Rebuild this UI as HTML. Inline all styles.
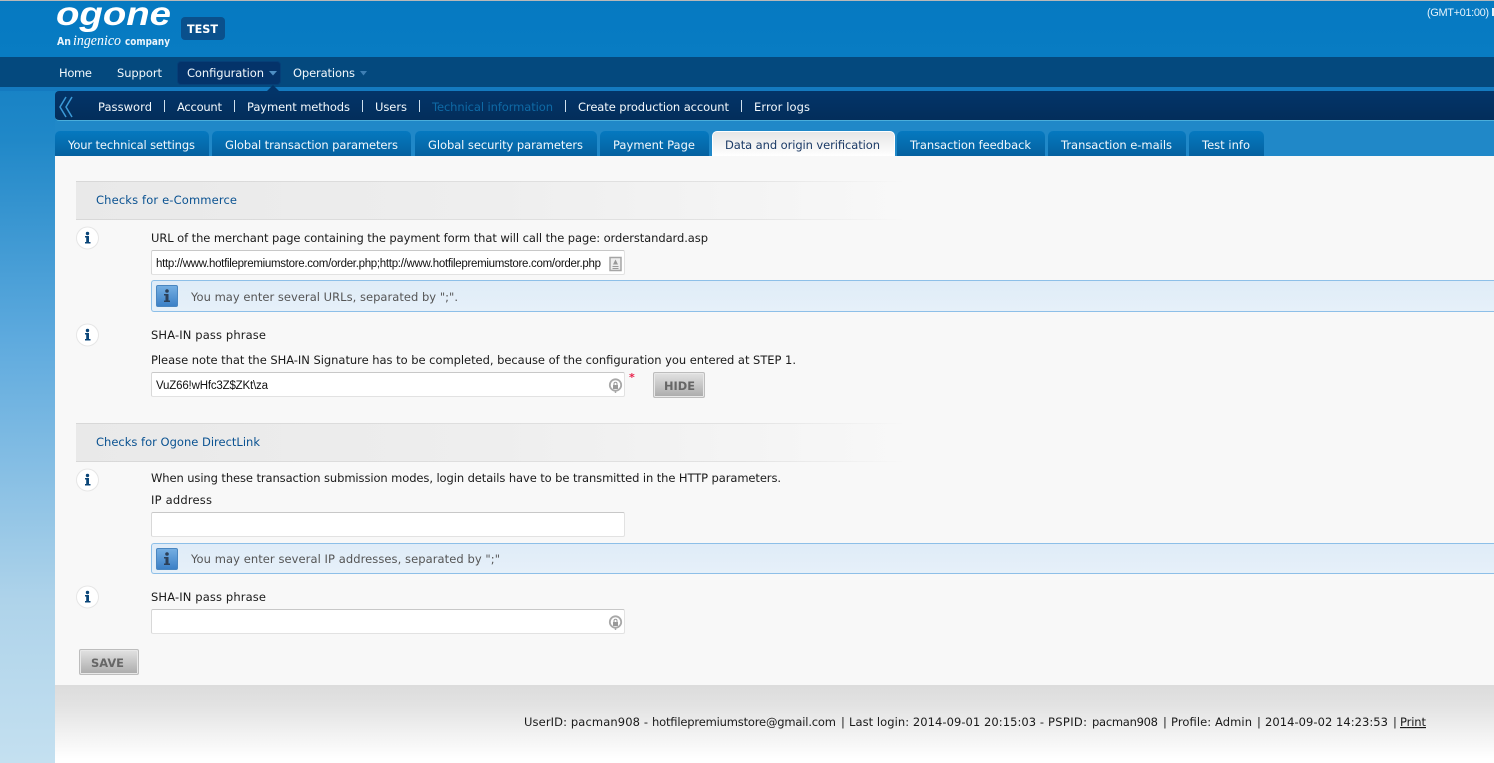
<!DOCTYPE html>
<html lang="en"><head><meta charset="utf-8"><title>Data and origin verification</title>
<style>
html,body{margin:0;padding:0;width:1494px;height:763px;overflow:hidden}
body{position:relative;background:linear-gradient(#0a7ac2 0,#2088c8 140px,#5eaade 340px,#aed3ea 600px,#c4e0f0 763px);font-family:"DejaVu Sans",sans-serif}
div{position:absolute;box-sizing:border-box}
svg{position:absolute;left:0;top:0}
text{font-family:"DejaVu Sans",sans-serif;font-size:11.5px;fill:#1a1a1a;white-space:pre}
.n text,text.n{fill:#f2f8fc}
.i{font-family:"Liberation Sans",sans-serif;font-size:11.5px;fill:#111}
.tab{top:131px;height:25px;border-radius:5px 5px 0 0;background:linear-gradient(#0579c0,#05619f)}
.inp{left:151px;width:474px;height:25px;background:#fff;border:1px solid #e2e2e2;border-top-color:#c8c8c8;border-left-color:#d8d8d8;border-radius:2px}
.box{left:151px;width:1343px;background:linear-gradient(#dfecf8,#e6f0f9);border:1px solid #8dbfe8;border-right:0;border-radius:3px 0 0 3px}
.ic{left:156px;width:22px;height:22px;border-radius:2px;background:linear-gradient(#74aee2,#3c80c6);border:1px solid #4a86c0}
.sec{left:76px;width:830px;background:linear-gradient(90deg,#e9e9e9,#eeeeee 50%,#f8f8f8);border-top:1px solid #dcdcdc;border-bottom:1px solid #e0e0e0;border-image:linear-gradient(90deg,#d8d8d8,#e2e2e2 80%,#f8f8f8) 1}
.btn{background:linear-gradient(#e2e2e2,#ababab);border:1px solid #bdbdbd;box-shadow:inset 0 0 0 1px #e8e8e8;border-radius:2px}
</style></head><body>
<div style="left:0;top:0;width:1494px;height:1px;background:#b8b8b8"></div>
<div style="left:0;top:1px;width:1494px;height:56px;background:linear-gradient(#0579c1,#087cc3)"></div>
<div style="left:181px;top:17px;width:44px;height:23px;border-radius:4px;background:#0a508c"></div>
<div style="left:0;top:57px;width:1494px;height:30px;background:#04497e"></div>
<div style="left:177px;top:61px;width:104px;height:24px;border-radius:4px;background:#04336a;border:1px solid #063f78"></div>
<div style="left:0;top:87px;width:1494px;height:4px;background:#147ac0"></div>
<div style="left:55px;top:91px;width:1439px;height:30px;border-radius:4px 0 0 4px;background:linear-gradient(#033469,#032e5b);border-bottom:1px solid #4aaedb"></div>
<div style="left:55px;top:121px;width:1439px;height:35px;background:#2088c8"></div>
<div class="tab" style="left:55px;width:154px"></div>
<div class="tab" style="left:212px;width:199px"></div>
<div class="tab" style="left:415px;width:182px"></div>
<div class="tab" style="left:600px;width:109px"></div>
<div class="tab" style="left:712px;width:183px;background:linear-gradient(#e6e6e6,#fff);border:1px solid #fff;border-bottom:0"></div>
<div class="tab" style="left:897px;width:148px"></div>
<div class="tab" style="left:1048px;width:138px"></div>
<div class="tab" style="left:1189px;width:75px"></div>
<div style="left:55px;top:156px;width:1439px;height:529px;background:#f8f8f8"></div>
<div style="left:55px;top:685px;width:1439px;height:78px;background:linear-gradient(#dcdcdc,#e2e2e2 25%,#fff 95%)"></div>
<div class="sec" style="top:181px;height:39px"></div>
<div class="sec" style="top:423px;height:39px"></div>
<div class="inp" style="top:250px"></div>
<div class="box" style="top:280px;height:32px"></div>
<div class="ic" style="top:285px"></div>
<div class="inp" style="top:372px"></div>
<div class="btn" style="left:653px;top:372px;width:52px;height:26px"></div>
<div class="inp" style="top:512px"></div>
<div class="box" style="top:543px;height:31px"></div>
<div class="ic" style="top:548px"></div>
<div class="inp" style="top:609px"></div>
<div class="btn" style="left:79px;top:649px;width:60px;height:26px"></div>

<svg width="1494" height="763" viewBox="0 0 1494 763" xmlns="http://www.w3.org/2000/svg">
<!-- logo -->
<text x="56" y="25" textLength="115" lengthAdjust="spacingAndGlyphs" style="font-family:'Liberation Sans',sans-serif;font-size:33px;font-weight:bold;font-style:italic;fill:#fff">ogone</text>
<text x="57" y="45" textLength="14" lengthAdjust="spacingAndGlyphs" style="font-size:11px;font-weight:bold;fill:#eaf4fb">An</text>
<text x="73" y="45" textLength="48" lengthAdjust="spacingAndGlyphs" style="font-family:'Liberation Serif',serif;font-size:15px;font-style:italic;fill:#fff">ingenico</text>
<text x="125" y="45" textLength="45" lengthAdjust="spacingAndGlyphs" style="font-size:11px;font-weight:bold;fill:#eaf4fb">company</text>
<text x="187" y="33" textLength="31" lengthAdjust="spacingAndGlyphs" style="font-size:11.5px;font-weight:bold;fill:#fff">TEST</text>
<text x="1427" y="16" textLength="62" style="font-family:'Liberation Sans',sans-serif;font-size:11px;fill:#e4f2fb">(GMT+01:00)</text>
<rect x="1492" y="8" width="2" height="8" fill="#e4f2fb"/>

<!-- main nav -->
<g class="n">
<text x="59" y="77" textLength="33">Home</text>
<text x="117" y="77" textLength="45">Support</text>
<text x="187" y="77" textLength="77">Configuration</text>
<text x="293" y="77" textLength="62">Operations</text>
</g>
<path d="M269 71h8l-4 4.500z" fill="#4f8fc4"/>
<path d="M360 71h7l-3.500 4.500z" fill="#3f7fb4"/>
<path d="M267 91l6-6 6 6z" fill="#033469"/>

<!-- sub nav -->
<path d="M66 97l-6 10 6 10M72 97l-6 10 6 10" fill="none" stroke="#3b9ad8" stroke-width="1.500"/>
<g class="n">
<text x="98" y="111" textLength="54">Password</text>
<text x="177" y="111" textLength="45">Account</text>
<text x="247" y="111" textLength="103">Payment methods</text>
<text x="375" y="111" textLength="32">Users</text>
<text x="432" y="111" textLength="121" style="fill:#0f6aa6">Technical information</text>
<text x="578" y="111" textLength="151">Create production account</text>
<text x="754" y="111" textLength="56">Error logs</text>
</g>
<path d="M164.500 100v12M234.500 100v12M362.500 100v12M419.500 100v12M565.500 100v12M741.500 100v12" stroke="#cfe0ee" stroke-width="1"/>

<!-- tabs -->
<g class="n">
<text x="68" y="149" textLength="127">Your technical settings</text>
<text x="225" y="149" textLength="173">Global transaction parameters</text>
<text x="428" y="149" textLength="155">Global security parameters</text>
<text x="613" y="149" textLength="82">Payment Page</text>
<text x="725" y="149" textLength="155" style="fill:#1b3a66">Data and origin verification</text>
<text x="910" y="149" textLength="121">Transaction feedback</text>
<text x="1061" y="149" textLength="111">Transaction e-mails</text>
<text x="1202" y="149" textLength="48">Test info</text>
</g>

<!-- section 1 -->
<text x="96" y="204" textLength="141" style="fill:#0a5291">Checks for e-Commerce</text>
<text x="151" y="242" textLength="557">URL of the merchant page containing the payment form that will call the page: orderstandard.asp</text>
<text class="i" x="156" y="267" textLength="445">http://www.hotfilepremiumstore.com/order.php;http://www.hotfilepremiumstore.com/order.php</text>
<text x="191" y="301" textLength="267" style="fill:#555">You may enter several URLs, separated by ";".</text>
<text x="151" y="339" textLength="115">SHA-IN pass phrase</text>
<text x="151" y="364" textLength="645">Please note that the SHA-IN Signature has to be completed, because of the configuration you entered at STEP 1.</text>
<text class="i" x="156" y="389" textLength="112">VuZ66!wHfc3Z$ZKt\za</text>
<text x="629" y="381" style="font-size:11px;font-weight:bold;fill:#e8204a">*</text>
<text x="664" y="390" textLength="31" lengthAdjust="spacingAndGlyphs" style="font-size:11.5px;font-weight:bold;fill:#666">HIDE</text>

<!-- section 2 -->
<text x="96" y="446" textLength="164" style="fill:#0a5291">Checks for Ogone DirectLink</text>
<text x="151" y="482" textLength="630">When using these transaction submission modes, login details have to be transmitted in the HTTP parameters.</text>
<text x="151" y="504" textLength="61">IP address</text>
<text x="191" y="563" textLength="309" style="fill:#555">You may enter several IP addresses, separated by ";"</text>
<text x="151" y="601" textLength="115">SHA-IN pass phrase</text>
<text x="91" y="667" textLength="33" lengthAdjust="spacingAndGlyphs" style="font-size:11.5px;font-weight:bold;fill:#666">SAVE</text>

<!-- info circles -->
<g><circle cx="87.500" cy="238" r="11" fill="#fff" stroke="#e6e6e6"/><circle cx="87.500" cy="233.500" r="1.700" fill="#0a4578"/><path d="M85 236h4v6h1.500v1.500h-5.500V242h1.200v-4.500H85z" fill="#0a4578"/></g>
<g><circle cx="87.500" cy="335" r="11" fill="#fff" stroke="#e6e6e6"/><circle cx="87.500" cy="330.500" r="1.700" fill="#0a4578"/><path d="M85 333h4v6h1.500v1.500h-5.500V339h1.200v-4.500H85z" fill="#0a4578"/></g>
<g><circle cx="87.500" cy="480" r="11" fill="#fff" stroke="#e6e6e6"/><circle cx="87.500" cy="475.500" r="1.700" fill="#0a4578"/><path d="M85 478h4v6h1.500v1.500h-5.500V484h1.200v-4.500H85z" fill="#0a4578"/></g>
<g><circle cx="87.500" cy="597" r="11" fill="#fff" stroke="#e6e6e6"/><circle cx="87.500" cy="592.500" r="1.700" fill="#0a4578"/><path d="M85 595h4v6h1.500v1.500h-5.500V601h1.200v-4.500H85z" fill="#0a4578"/></g>

<!-- blue info icons -->
<g fill="#2c4058"><circle cx="167" cy="291" r="1.800"/><path d="M164 294h4.500v6.500h1.500v1.500h-6v-1.500h1.500v-5h-1.500z"/></g>
<g fill="#2c4058"><circle cx="167" cy="554" r="1.800"/><path d="M164 557h4.500v6.500h1.500v1.500h-6v-1.500h1.500v-5h-1.500z"/></g>

<!-- field icons -->
<rect x="610" y="257.500" width="11" height="13" fill="#eeeeee" stroke="#a5a5a5" stroke-width="1.500"/>
<path d="M612.500 266.500h6M612.500 268.500h6" stroke="#999" stroke-width="1"/>
<path d="M615.500 259.500l2.500 5h-5z" fill="#999"/>
<g fill="none"><circle cx="615.500" cy="385" r="5.700" stroke="#a8a8a8" stroke-width="1.800"/><rect x="613" y="385" width="5" height="4" fill="#999"/><path d="M614 385v-1.200a1.500 1.500 0 0 1 3 0V385" stroke="#999"/><path d="M615.500 391v2" stroke="#a8a8a8" stroke-width="1.500"/></g>
<g fill="none" transform="translate(0,237)"><circle cx="615.500" cy="385" r="5.700" stroke="#a8a8a8" stroke-width="1.800"/><rect x="613" y="385" width="5" height="4" fill="#999"/><path d="M614 385v-1.200a1.500 1.500 0 0 1 3 0V385" stroke="#999"/><path d="M615.500 391v2" stroke="#a8a8a8" stroke-width="1.500"/></g>

<!-- footer -->
<text x="524" y="726" textLength="124">UserID: pacman908 -</text>
<text x="652" y="726" textLength="184">hotfilepremiumstore@gmail.com</text>
<text x="841" y="726">|</text>
<text x="849" y="726" textLength="195">Last login: 2014-09-01 20:15:03 -</text>
<text x="1048" y="726" textLength="39">PSPID:</text>
<text x="1092" y="726" textLength="66">pacman908</text>
<text x="1163" y="726">|</text>
<text x="1171" y="726" textLength="81">Profile: Admin</text>
<text x="1257" y="726">|</text>
<text x="1265" y="726" textLength="123">2014-09-02 14:23:53</text>
<text x="1393" y="726">|</text>
<text x="1400" y="726" textLength="26" style="text-decoration:underline">Print</text>
</svg>
</body></html>
